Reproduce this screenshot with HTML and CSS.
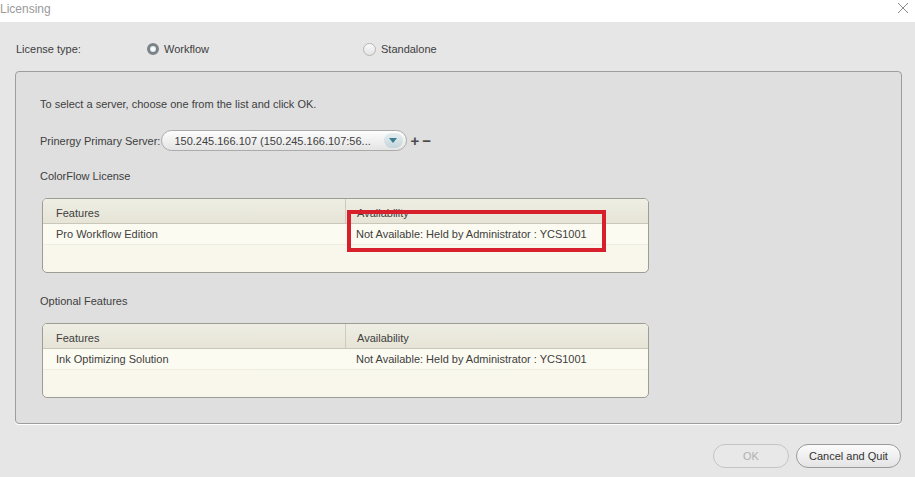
FILE: index.html
```html
<!DOCTYPE html>
<html lang="en">
<head>
<meta charset="UTF-8">
<title>Licensing</title>
<link rel="stylesheet" href="styles.css">
</head>
<body>
<div class="window">
  <div class="titlebar">
    <span class="title">Licensing</span>
    <svg class="close" width="12" height="12" viewBox="0 0 12 12">
      <path d="M1 1 L11 11 M11 1 L1 11" stroke="#8a8a8a" stroke-width="1" fill="none"/>
    </svg>
  </div>

  <div class="typebar">
    <span class="type-label">License type:</span>
    <label class="option option-first"><span class="radio checked"></span>Workflow</label>
    <label class="option"><span class="radio"></span>Standalone</label>
  </div>

  <div class="panel">
    <div class="hint">To select a server, choose one from the list and click OK.</div>

    <div class="server-row">
      <span>Prinergy Primary Server:</span>
      <div class="combo">
        <span class="combo-text">150.245.166.107 (150.245.166.107:56...</span>
        <span class="combo-arrow"></span>
      </div>
      <span class="tool">+</span>
      <span class="tool">&minus;</span>
    </div>

    <div class="section-label">ColorFlow License</div>
    <div class="grid">
      <div class="grid-head">
        <div class="col-a">Features</div>
        <div class="col-b">Availability</div>
      </div>
      <div class="grid-row">
        <div class="col-a">Pro Workflow Edition</div>
        <div class="col-b">Not Available: Held by Administrator : YCS1001</div>
      </div>
      <div class="highlight"></div>
    </div>

    <div class="section-label section-gap">Optional Features</div>
    <div class="grid">
      <div class="grid-head">
        <div class="col-a">Features</div>
        <div class="col-b">Availability</div>
      </div>
      <div class="grid-row">
        <div class="col-a">Ink Optimizing Solution</div>
        <div class="col-b">Not Available: Held by Administrator : YCS1001</div>
      </div>
    </div>
  </div>

  <div class="footer">
    <button class="btn btn-ok" disabled>OK</button>
    <button class="btn btn-quit">Cancel and Quit</button>
  </div>
</div>
</body>
</html>
```

FILE: styles.css
```css
body {
  margin: 0;
  font-family: "Liberation Sans", Arial, sans-serif;
  font-size: 11px;
  line-height: 14px;
  color: #404040;
  background: #e6e6e6;
}
.window {
  width: 915px;
  height: 477px;
  overflow: hidden;
  background: #e6e6e6;
}

/* title bar */
.titlebar {
  height: 22px;
  background: #fff;
  display: flex;
  align-items: center;
  justify-content: space-between;
  padding-right: 6px;
}
.title {
  color: #9a9a9a;
  font-size: 12px;
  margin-top: -4px;
}
.close {
  margin-top: -6px;
}

/* license type */
.typebar {
  height: 44px;
  padding-top: 5px;
  display: flex;
  align-items: center;
  padding-left: 16px;
}
.type-label {
  width: 131px;
}
.option {
  display: flex;
  align-items: center;
}
.option-first {
  width: 216px;
}
.radio {
  width: 11px;
  height: 11px;
  border-radius: 50%;
  border: 1px solid #b5b5b5;
  background: linear-gradient(#fafafa, #e2e2e2);
  margin-right: 5px;
  box-sizing: content-box;
}
.radio.checked {
  width: 6px;
  height: 6px;
  border: 3px solid #7c8388;
  background: radial-gradient(circle, #ffffff 20%, #c9dde4 100%);
}

/* main panel */
.panel {
  margin: 0 13px 0 15px;
  height: 353px;
  box-sizing: border-box;
  border: 1px solid #9d9d9d;
  border-radius: 4px;
  background: #dfdfdf;
  box-shadow: 0 1px 0 #fff;
  padding: 25px 24px 0 24px;
}
.server-row {
  margin-top: 19px;
  display: flex;
  align-items: center;
  height: 21px;
}
.combo {
  margin-left: 1px;
  width: 246px;
  height: 21px;
  box-sizing: border-box;
  border: 1px solid #ababab;
  border-radius: 11px;
  background: linear-gradient(#fdfdfd, #e4e4e4);
  display: flex;
  align-items: center;
  justify-content: space-between;
  padding: 0 3px 0 12px;
}
.combo-text {
  white-space: nowrap;
}
.combo-arrow {
  width: 19px;
  height: 15px;
  border-radius: 8px;
  background: linear-gradient(#e6eef1, #c4d6dc);
  position: relative;
  flex: none;
}
.combo-arrow::after {
  content: "";
  position: absolute;
  left: 5px;
  top: 5px;
  border-left: 4.5px solid transparent;
  border-right: 4.5px solid transparent;
  border-top: 5px solid #3b7d8f;
}
.tool {
  font-weight: bold;
  font-size: 15px;
  color: #4a4a4a;
  margin-left: 3px;
  line-height: 14px;
}
.section-label {
  margin-top: 18px;
}
.section-gap {
  margin-top: 21px;
}

/* feature tables */
.grid {
  position: relative;
  margin: 15px 0 0 2px;
  width: 607px;
  height: 75px;
  box-sizing: border-box;
  border: 1px solid #9e9d94;
  border-radius: 5px;
  background: linear-gradient(#fcfbf1, #f8f6ea);
  overflow: hidden;
}
.grid-head,
.grid-row {
  display: flex;
  align-items: center;
}
.grid-head {
  height: 24px;
  background: linear-gradient(#efeee4, #e6e4d6);
  border-bottom: 1px solid #c9c7ba;
}
.grid-head > div {
  padding-top: 4px;
  height: 20px;
  line-height: 20px;
}
.grid-row {
  height: 20px;
  border-bottom: 1px solid #efede0;
  background: #fcfbf1;
}
.col-a {
  width: 302px;
  padding-left: 13px;
  box-sizing: border-box;
}
.grid-head .col-a {
  border-right: 1px solid #cdcbbf;
  box-sizing: content-box;
  width: 289px;
}
.col-b {
  padding-left: 11px;
}
.highlight {
  position: absolute;
  left: 304px;
  top: 11px;
  width: 259px;
  height: 42px;
  box-sizing: border-box;
  border: 4px solid #d8202d;
}

/* buttons */
.footer {
  display: flex;
  justify-content: flex-end;
  gap: 7px;
  padding: 20px 14px 0 0;
}
.btn {
  height: 24px;
  border-radius: 12px;
  border: 1px solid #9a9a9a;
  background: linear-gradient(#fbfbfb, #e4e4e4);
  font-family: "Liberation Sans", Arial, sans-serif;
  font-size: 11px;
  color: #333;
  padding: 0;
}
.btn-ok {
  width: 76px;
  color: #b0b0b0;
  border-color: #c4c4c4;
  background: #e8e8e8;
}
.btn-quit {
  width: 105px;
}
```
